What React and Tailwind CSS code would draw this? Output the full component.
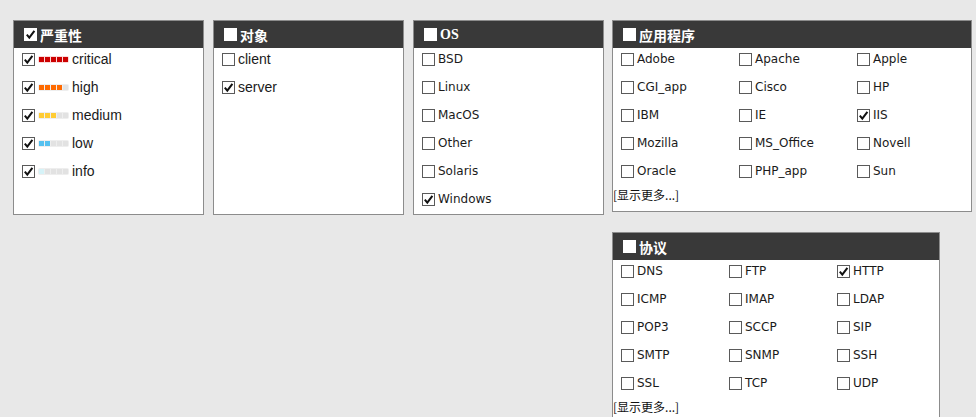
import React from "react";

const SANS = { fontFamily: '"Liberation Sans", "Noto Sans CJK SC", sans-serif' };
const TAHOMA = { fontFamily: '"DejaVu Sans", "Noto Sans CJK SC", sans-serif' };

function Check({ on, header }) {
  return (
    <span
      className={
        header
          ? "w-[13px] h-[13px] bg-white flex items-center justify-center shrink-0"
          : "w-[13px] h-[13px] bg-white border border-[#5a5a5a] flex items-center justify-center shrink-0"
      }
    >
      {on && (
        <svg width="11" height="11" viewBox="0 0 11 11">
          <path d="M1.8 5.6 L4.3 8.6 L9.4 1.8" fill="none" stroke="#111" strokeWidth="2" />
        </svg>
      )}
    </span>
  );
}

function Header({ title, on, serif }) {
  return (
    <div className="h-[27px] bg-[#393939] flex items-center pl-[10px]">
      <Check on={on} header />
      <span
        className="ml-[3px] text-white font-bold text-[14px] leading-none"
        style={{ fontFamily: serif ? '"Liberation Serif", serif' : '"Noto Sans CJK SC", sans-serif' }}
      >
        {title}
      </span>
    </div>
  );
}

const levels = [
  { name: "critical", color: "bg-[#cc0000]", box: "bg-[#fbd9d9]", n: 5 },
  { name: "high", color: "bg-[#ff6a00]", box: "bg-[#eeeeee]", n: 4 },
  { name: "medium", color: "bg-[#ffcc33]", box: "bg-[#eeeeee]", n: 3 },
  { name: "low", color: "bg-[#55c1f0]", box: "bg-[#eeeeee]", n: 2 },
  { name: "info", color: "bg-[#d6f3f8]", box: "bg-[#eeeeee]", n: 1 },
];

function Bar({ color, box, n }) {
  return (
    <span className={"flex gap-[1px] p-[1px] rounded-[2px] mt-[1px] " + box}>
      {[0, 1, 2, 3, 4].map((i) => (
        <span key={i} className={"w-[5px] h-[5px] " + (i < n ? color : "bg-[#e2e2e2]")} />
      ))}
    </span>
  );
}

function Row({ on, children, font }) {
  return (
    <div className="h-[20px] mb-[8px] flex items-center gap-[3px] text-[#1a1a1a]" style={font}>
      <Check on={on} />
      {children}
    </div>
  );
}

function Panel({ title, on, serif, h, w, children }) {
  return (
    <div className={"border border-[#8c8c8c] bg-white shrink-0 " + h + " " + w}>
      <Header title={title} on={on} serif={serif} />
      <div className="pt-[1px]">{children}</div>
    </div>
  );
}

function Grid({ items, checked, cols }) {
  return (
    <div className={"grid pl-[8px] " + cols}>
      {items.map((t) => (
        <Row key={t} on={checked.includes(t)} font={TAHOMA}>
          <span className="text-[12px] leading-none">{t}</span>
        </Row>
      ))}
    </div>
  );
}

function More() {
  return (
    <div
      className="text-[12px] leading-[14px] text-[#111] -mt-[1px]"
      style={{ fontFamily: '"Noto Sans CJK SC", sans-serif' }}
    >
      [显示更多...]
    </div>
  );
}

export default function App() {
  return (
    <div className="min-h-screen bg-[#e8e8e8] pt-[20px] pl-[13px] overflow-hidden">
      <div className="flex items-start">
        <Panel title="严重性" on h="h-[195px]" w="w-[191px]">
          <div className="pl-[8px]">
            {levels.map((l) => (
              <Row key={l.name} on font={SANS}>
                <Bar color={l.color} box={l.box} n={l.n} />
                <span className="text-[14px] leading-none">{l.name}</span>
              </Row>
            ))}
          </div>
        </Panel>
        <div className="ml-[9px]">
          <Panel title="对象" h="h-[195px]" w="w-[191px]">
            <div className="pl-[8px]">
              <Row font={SANS}>
                <span className="text-[14px] leading-none">client</span>
              </Row>
              <Row on font={SANS}>
                <span className="text-[14px] leading-none">server</span>
              </Row>
            </div>
          </Panel>
        </div>
        <div className="ml-[9px]">
          <Panel title="OS" serif h="h-[195px]" w="w-[191px]">
            <div className="pl-[8px]">
              {["BSD", "Linux", "MacOS", "Other", "Solaris", "Windows"].map((t) => (
                <Row key={t} on={t === "Windows"} font={TAHOMA}>
                  <span className="text-[12px] leading-none">{t}</span>
                </Row>
              ))}
            </div>
          </Panel>
        </div>
        <div className="ml-[8px] flex flex-col">
          <Panel title="应用程序" h="h-[192px]" w="w-[360px]">
            <Grid
              cols="grid-cols-[118px_118px_118px]"
              items={["Adobe", "Apache", "Apple", "CGI_app", "Cisco", "HP", "IBM", "IE", "IIS", "Mozilla", "MS_Office", "Novell", "Oracle", "PHP_app", "Sun"]}
              checked={["IIS"]}
            />
            <More />
          </Panel>
          <div className="mt-[20px]">
            <Panel title="协议" h="h-[200px]" w="w-[328px]">
              <Grid
                cols="grid-cols-[108px_108px_108px]"
                items={["DNS", "FTP", "HTTP", "ICMP", "IMAP", "LDAP", "POP3", "SCCP", "SIP", "SMTP", "SNMP", "SSH", "SSL", "TCP", "UDP"]}
                checked={["HTTP"]}
              />
              <More />
            </Panel>
          </div>
        </div>
      </div>
    </div>
  );
}
